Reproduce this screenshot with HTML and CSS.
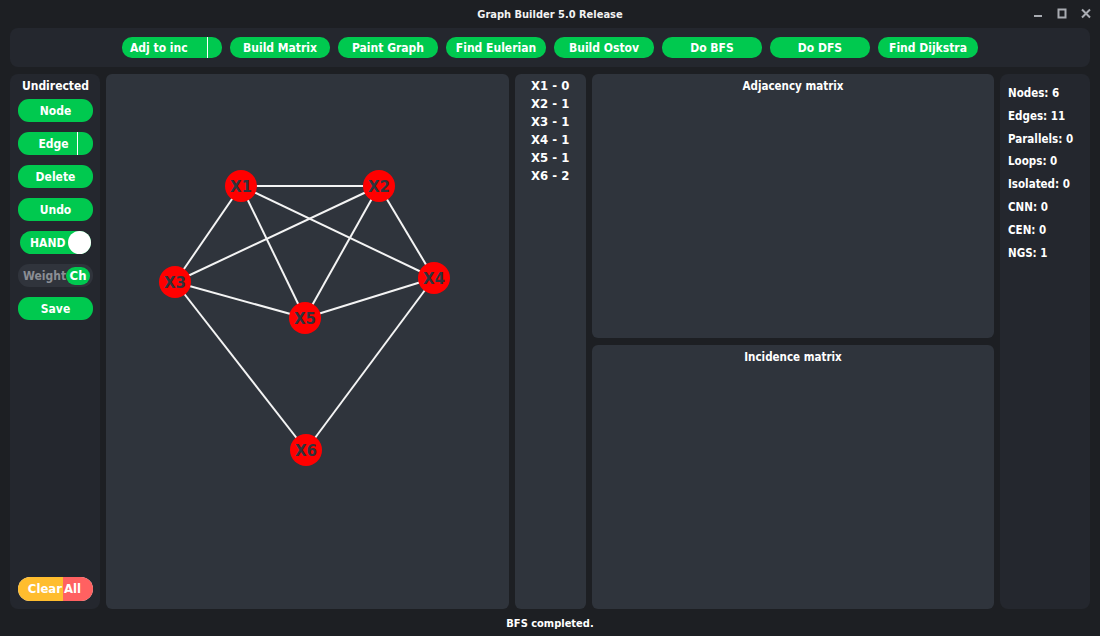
FILE: index.html
```html
<!DOCTYPE html>
<html>
<head>
<meta charset="utf-8">
<link rel="stylesheet" href="styles.css">
</head>
<body>
<div class="app">
  <header class="titlebar">
    <div></div>
    <div class="title">Graph Builder 5.0 Release</div>
    <div class="winctl">
      <svg class="wi" width="12" height="12" viewBox="0 0 12 12"><rect x="2" y="7" width="8" height="2" fill="#a9acb2"/></svg>
      <svg class="wi" width="12" height="12" viewBox="0 0 12 12"><rect x="2.5" y="1.5" width="7" height="8" fill="none" stroke="#a9acb2" stroke-width="2"/></svg>
      <svg class="wi" width="12" height="12" viewBox="0 0 12 12"><path d="M2 1.5 L10 9.5 M10 1.5 L2 9.5" stroke="#a9acb2" stroke-width="2"/></svg>
    </div>
  </header>

  <nav class="toolbar">
    <button class="btn btn-split">Adj to inc<span class="divider"></span></button>
    <button class="btn">Build Matrix</button>
    <button class="btn">Paint Graph</button>
    <button class="btn">Find Eulerian</button>
    <button class="btn">Build Ostov</button>
    <button class="btn">Do BFS</button>
    <button class="btn">Do DFS</button>
    <button class="btn">Find Dijkstra</button>
  </nav>

  <main class="workspace">
    <aside class="tools">
      <div class="tools-label">Undirected</div>
      <button class="tbtn">Node</button>
      <button class="tbtn tbtn-split"><span>Edge</span><span class="divider"></span></button>
      <button class="tbtn">Delete</button>
      <button class="tbtn">Undo</button>
      <div class="toggle"><span>HAND</span><span class="knob"></span></div>
      <div class="weight"><span class="wlabel">Weight</span><span class="wch">Ch</span></div>
      <button class="tbtn">Save</button>
      <div class="spacer"></div>
      <button class="clear"><span class="c1">Clear</span><span class="c2">All</span></button>
    </aside>

    <section class="canvas">
      <svg class="graph" width="403" height="535" viewBox="0 0 403 535">
        <g stroke="#f4f4f4" stroke-width="2">
          <line x1="135" y1="112" x2="273" y2="112"/>
          <line x1="135" y1="112" x2="69" y2="208"/>
          <line x1="135" y1="112" x2="199" y2="244"/>
          <line x1="135" y1="112" x2="328" y2="204"/>
          <line x1="273" y1="112" x2="69" y2="208"/>
          <line x1="273" y1="112" x2="199" y2="244"/>
          <line x1="273" y1="112" x2="328" y2="204"/>
          <line x1="69" y1="208" x2="199" y2="244"/>
          <line x1="69" y1="208" x2="200" y2="376"/>
          <line x1="328" y1="204" x2="199" y2="244"/>
          <line x1="328" y1="204" x2="200" y2="376"/>
        </g>
        <g fill="#ff0000">
          <circle cx="135" cy="112" r="16"/>
          <circle cx="273" cy="112" r="16"/>
          <circle cx="69" cy="208" r="16"/>
          <circle cx="328" cy="204" r="16"/>
          <circle cx="199" cy="244" r="16"/>
          <circle cx="200" cy="376" r="16"/>
        </g>
        <g class="nlabel" text-anchor="middle" dominant-baseline="central">
          <text x="135" y="113">X1</text>
          <text x="273" y="113">X2</text>
          <text x="69" y="209">X3</text>
          <text x="328" y="205">X4</text>
          <text x="199" y="245">X5</text>
          <text x="200" y="377">X6</text>
        </g>
      </svg>
    </section>

    <section class="degrees">
      <div>X1 - 0</div>
      <div>X2 - 1</div>
      <div>X3 - 1</div>
      <div>X4 - 1</div>
      <div>X5 - 1</div>
      <div>X6 - 2</div>
    </section>

    <section class="matrices">
      <div class="matrix"><div class="mtitle">Adjacency matrix</div></div>
      <div class="matrix"><div class="mtitle">Incidence matrix</div></div>
    </section>

    <aside class="stats">
      <div>Nodes: 6</div>
      <div>Edges: 11</div>
      <div>Parallels: 0</div>
      <div>Loops: 0</div>
      <div>Isolated: 0</div>
      <div>CNN: 0</div>
      <div>CEN: 0</div>
      <div>NGS: 1</div>
    </aside>
  </main>

  <footer class="status">BFS completed.</footer>
</div>
</body>
</html>
```

FILE: styles.css
```css
* { box-sizing: border-box; }
html, body { margin: 0; padding: 0; }
body {
  background: #1d1f23;
  color: #ffffff;
  font-family: "DejaVu Sans Condensed", "DejaVu Sans", sans-serif;
  font-weight: bold;
  font-size: 12px;
  width: 1100px;
  height: 636px;
  overflow: hidden;
}
.app { display: flex; flex-direction: column; height: 636px; }

.titlebar {
  height: 28px;
  display: grid;
  grid-template-columns: 1fr auto 1fr;
  align-items: center;
}
.title { font-size: 11px; font-weight: bold; color: #f2f2f2; padding-top: 1px; }
.winctl { display: flex; justify-content: flex-end; gap: 12px; padding-right: 8px; }
.wi { display: block; }

.toolbar {
  margin: 0 10px;
  height: 39px;
  background: #24272e;
  border-radius: 8px;
  display: flex;
  justify-content: center;
  align-items: center;
  gap: 8px;
}
.btn {
  width: 100px;
  height: 21px;
  border: none;
  border-radius: 10px;
  background: #00c94f;
  color: #fff;
  font: inherit;
  padding: 0;
  position: relative;
}
.btn-split { text-align: left; padding-left: 8px; }
.btn-split .divider {
  position: absolute; left: 85px; top: 0; bottom: 0; width: 1px; background: #fff;
}

.workspace {
  margin: 7px 10px 0;
  height: 535px;
  display: flex;
  gap: 6px;
}
.tools {
  width: 90px;
  background: #24272e;
  border-radius: 8px;
  display: flex;
  flex-direction: column;
  padding: 5px 7px 8px 8px;
  gap: 10px;
}
.tools-label { text-align: center; height: 14px; line-height: 14px; margin-bottom: -4px; }
.tbtn {
  height: 23px;
  width: 75px;
  flex: none;
  border: none;
  border-radius: 11px;
  background: #00c94f;
  color: #fff;
  font: inherit;
  padding: 0;
  position: relative;
}
.tbtn-split span:first-child { position: relative; left: -2px; }
.tbtn-split .divider {
  position: absolute; left: 59px; top: 0; bottom: 0; width: 1px; background: #fff;
}
.toggle {
  height: 23px;
  flex: none;
  margin: 0 2px;
  border-radius: 12px;
  background: #00c94f;
  display: flex;
  align-items: center;
  justify-content: space-between;
  padding-left: 10px;
  position: relative;
}
.knob {
  width: 23px; height: 23px; border-radius: 50%; background: #fff;
}
.weight {
  height: 23px;
  flex: none;
  border-radius: 11px;
  background: #30343c;
  display: flex;
  align-items: center;
  justify-content: space-between;
  padding: 0 3px 0 5px;
}
.wlabel { color: #8b8e94; }
.wch {
  background: #00c94f; color: #fff; border-radius: 9px;
  height: 18px; width: 26px; line-height: 18px; text-align: center; font-size: 13px;
}
.spacer { flex: 1; }
.clear {
  height: 24px; width: 75px; border: none; padding: 0; flex: none;
  border-radius: 12px; overflow: hidden;
  display: flex; font: inherit; font-size: 13px; color: #fff;
}
.clear .c1 { background: #ffbd2e; width: 45px; line-height: 24px; text-align: right; padding-right: 1px; }
.clear .c2 { background: #ff6161; flex: 1; line-height: 24px; text-align: left; padding-left: 1px; }

.canvas {
  width: 403px;
  background: #2f343c;
  border-radius: 6px;
  position: relative;
  overflow: hidden;
}
.graph { position: absolute; left: 0; top: 0; }
.nlabel { font-family: "DejaVu Sans", sans-serif; font-weight: bold; font-size: 15px; fill: #2f343c; }

.degrees {
  width: 71px;
  background: #2f343c;
  border-radius: 6px;
  padding: 3px 0 0 16px;
  font-size: 13px;
  line-height: 18px;
}
.matrices {
  width: 402px;
  display: flex;
  flex-direction: column;
  gap: 7px;
}
.matrix {
  flex: 1;
  background: #2f343c;
  border-radius: 6px;
}
.mtitle { text-align: center; padding-top: 5px; line-height: 14px; font-size: 11.5px; }

.stats {
  width: 90px;
  background: #24272e;
  border-radius: 8px;
  padding: 8px 0 0 8px;
  line-height: 22.8px;
  font-size: 11.5px;
}

.status {
  flex: 1;
  display: flex;
  align-items: center;
  justify-content: center;
  padding-top: 1px;
  font-size: 11px;
}
```
